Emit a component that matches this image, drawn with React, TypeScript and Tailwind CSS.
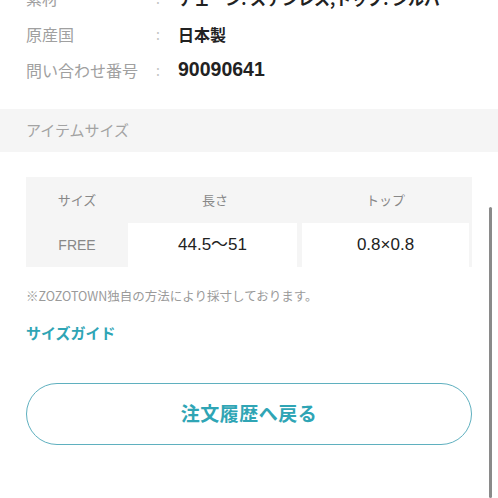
import React from "react";

export default function App() {
  const specs = [
    { label: "素材", value: "チェーン: ステンレス,トップ: シルバー", big: false },
    { label: "原産国", value: "日本製", big: false },
    { label: "問い合わせ番号", value: "90090641", big: true },
  ];

  const latin = { fontFamily: '"Liberation Sans", "Noto Sans CJK JP", sans-serif' };

  return (
    <div
      className="relative w-[498px] h-[498px] overflow-hidden bg-white"
      style={{ fontFamily: '"Noto Sans CJK JP", "Noto Sans", sans-serif' }}
    >
      {/* Spec list (scrolled, first row cut off) */}
      <div className="-mt-[20px] pb-[21px]">
        {specs.map((row, idx) => (
          <div key={idx} className="flex items-center h-[36px] px-[26px]">
            <span className="w-[130px] text-[16px] text-[#a0a0a0] whitespace-nowrap">{row.label}</span>
            <span className="w-[22px] text-[14px] text-[#c4c4c4]">:</span>
            <span
              className={
                row.big
                  ? "text-[19.5px] font-bold text-[#222]"
                  : "text-[16px] font-bold text-[#222] whitespace-nowrap"
              }
              style={row.big ? latin : undefined}
            >
              {row.value}
            </span>
          </div>
        ))}
      </div>

      {/* Section header */}
      <div className="h-[43px] bg-[#f5f5f5] flex items-center px-[26px]">
        <span className="text-[15px] text-[#a3a3a3]">アイテムサイズ</span>
      </div>

      {/* Size table */}
      <div className="px-[26px] pt-[25px]">
        <div className="grid grid-cols-[102px_174px_1fr] bg-[#f5f5f5] pr-[3px]">
          <div className="h-[46px] flex items-center justify-center text-[13px] text-[#888]">サイズ</div>
          <div className="h-[46px] flex items-center justify-center text-[13px] text-[#888]">長さ</div>
          <div className="h-[46px] flex items-center justify-center text-[13px] text-[#888]">トップ</div>
          <div className="h-[44px] flex items-center justify-center text-[14px] text-[#888]" style={latin}>FREE</div>
          <div className="h-[44px] mr-[5px] bg-white flex items-center justify-center text-[17px] text-[#222]" style={latin}>44.5〜51</div>
          <div className="h-[44px] bg-white flex items-center justify-center text-[17px] text-[#222]" style={latin}>0.8×0.8</div>
        </div>
      </div>

      <p className="px-[26px] mt-[20px] text-[12.5px] text-[#9a9a9a] leading-[18px]">
        ※ZOZOTOWN独自の方法により採寸しております。
      </p>

      <div className="px-[26px] mt-[15px]">
        <span className="text-[15px] font-bold text-[#2fa5b5]">サイズガイド</span>
      </div>

      <div className="px-[26px] mt-[38px]">
        <button className="w-full h-[62px] rounded-full border-[1.5px] border-[#5fb0bf] bg-white flex items-center justify-center">
          <span className="text-[19px] font-bold text-[#2fa5b5] tracking-[0.5px]">注文履歴へ戻る</span>
        </button>
      </div>

      {/* Scroll indicator */}
      <div className="absolute right-[6px] top-[207px] bottom-0 w-[3px] rounded-full bg-[#8a8a8a]" />
    </div>
  );
}
